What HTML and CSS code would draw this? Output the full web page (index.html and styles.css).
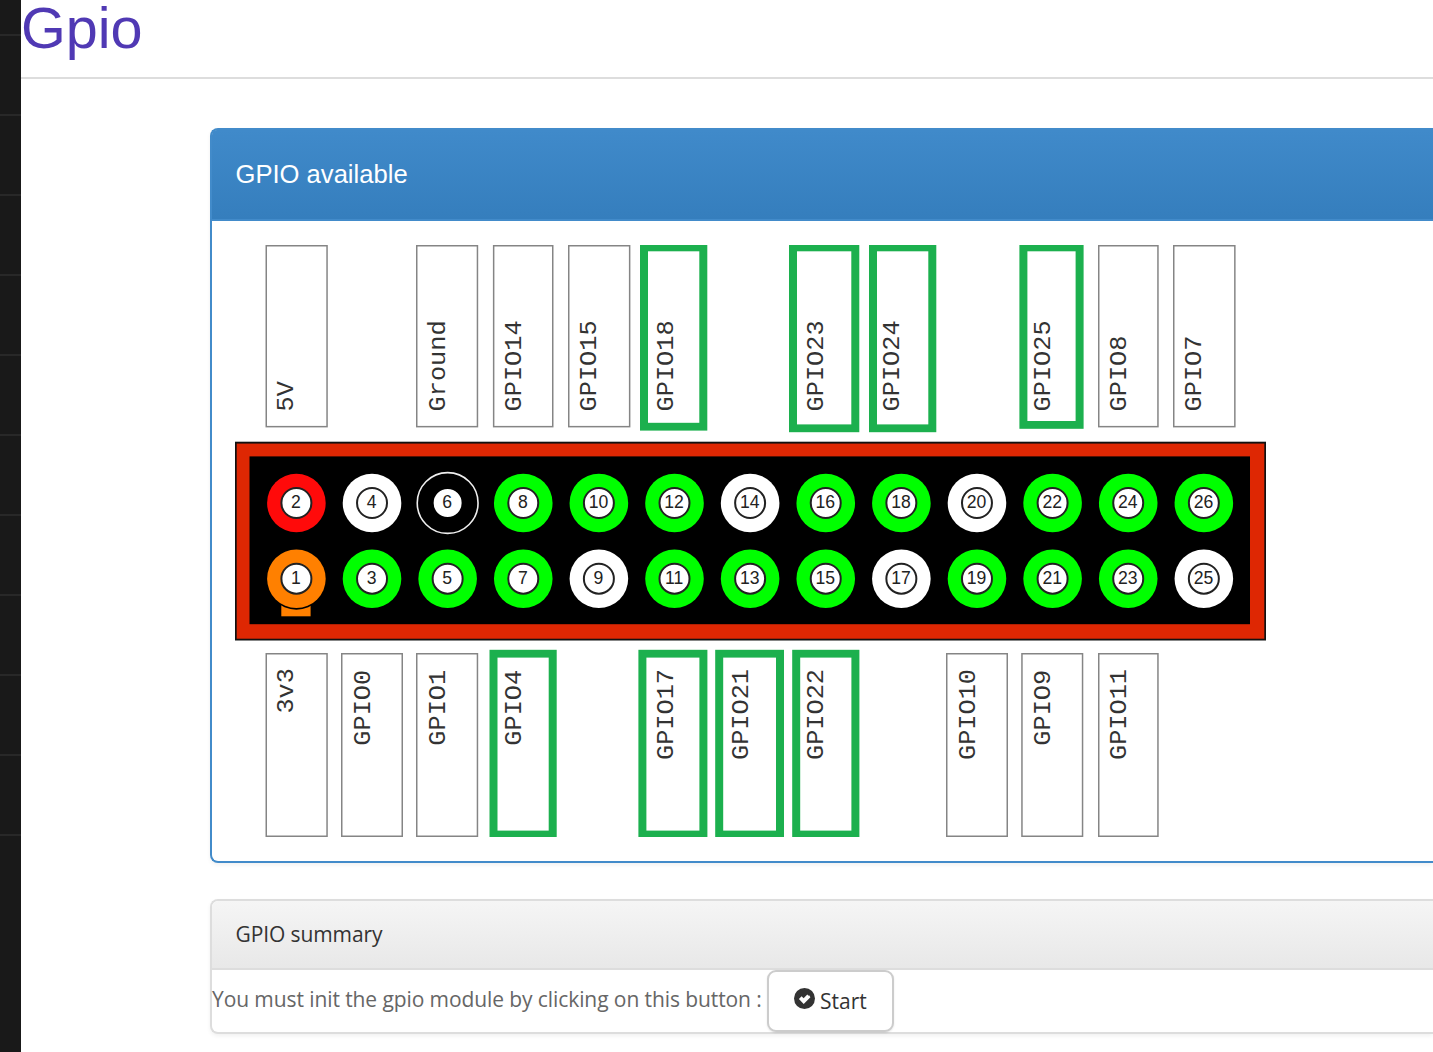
FILE: index.html
```html
<!DOCTYPE html>
<html lang="en">
<head>
<meta charset="utf-8">
<title>Gpio</title>
<link rel="stylesheet" href="styles.css">
</head>
<body>
<div class="layout">
  <nav class="sidebar">
    <div class="slot slot-first"></div><div class="slot"></div><div class="slot"></div><div class="slot"></div>
    <div class="slot"></div><div class="slot"></div><div class="slot"></div><div class="slot"></div>
    <div class="slot"></div><div class="slot"></div><div class="slot"></div>
  </nav>
  <main class="content">
    <h1 class="page-title">Gpio</h1>
    <section class="panel panel-primary">
      <h2 class="panel-heading">GPIO available</h2>
      <div class="panel-body">
        <svg class="board" id="board" viewBox="235 245 1031 592" width="1031" height="592"></svg>
      </div>
    </section>
    <section class="panel panel-default">
      <h2 class="panel-heading">GPIO summary</h2>
      <div class="start-row">
        <span class="hint">You must init the gpio module by clicking on this button :</span>
        <button class="btn" type="button">
          <svg class="check" viewBox="0 0 21 21" width="21" height="21"><circle cx="10.5" cy="10.5" r="10.5" fill="#333"/><path d="M4.9 11L7.6 8.3L9.6 10.3L13.3 6.6L14.5 7.8L15.1 7.2L16.4 9.2L9.7 15.9Z" fill="#fff"/></svg>
          <span class="btn-label">Start</span>
        </button>
      </div>
    </section>
  </main>
</div>
<script src="board.js"></script>
</body>
</html>
```
FILE: styles.css
```css
* { box-sizing: border-box; }
body { margin: 0; background: #fff; color: #666; font-family: "Open Sans", sans-serif; overflow: hidden; }
.layout { display: flex; height: 1052px; }
.sidebar { flex: 0 0 21px; background: #191919; overflow: hidden; }
.slot { height: 80px; border-bottom: 2px solid #282828; }
.slot-first { height: 36px; }
.content { flex: 1; min-width: 0; }
.page-title { margin: 0 0 49px; height: 79px; border-bottom: 2px solid #ddd; font: 400 57.6px/56px "Liberation Sans", sans-serif; color: #5039b4; }
.panel { margin-left: 189px; border: 2px solid #ddd; border-right: 0; border-radius: 8px 0 0 8px; background: #fff; box-shadow: 0 2px 4px rgba(0,0,0,.06); }
.panel-heading { margin: 0; font-weight: 400; padding-left: 23.5px; }
.panel-primary { height: 735px; border-color: #428bca; margin-bottom: 36px; }
.panel-primary .panel-heading { height: 91px; border-bottom: 2px solid #428bca; border-radius: 5px 0 0 0; background: linear-gradient(#408aca, #357ebd); color: #fff; font: 400 25.6px/89px "Liberation Sans", sans-serif; }
.panel-body { padding: 24px 23px; }
.board { display: block; }
.board-pin { font: 17.6px "Liberation Sans", sans-serif; fill: #222; text-anchor: middle; }
.board-label { font: 23px "Liberation Mono", monospace; fill: #333; }
.panel-default { height: 135px; }
.panel-default .panel-heading { height: 69px; border-bottom: 2px solid #ddd; border-radius: 6px 0 0 0; background: linear-gradient(#f5f5f5, #e8e8e8); color: #333; font-size: 21px; line-height: 67px; letter-spacing: -.1px; }
.start-row { display: flex; }
.hint { flex: 0 0 555px; font-size: 21px; line-height: 58px; letter-spacing: -.09px; white-space: nowrap; }
.btn { display: flex; align-items: center; gap: 5px; width: 127px; height: 62px; padding: 0 0 0 25px; border: 2px solid #ccc; border-radius: 9px; background: #fff; color: #333; font: 21px/58px "Open Sans", sans-serif; box-shadow: 0 1px 2px rgba(0,0,0,.1); }
.check { flex: none; margin-top: -5px; }
```
FILE: board.js
```js
const svg = document.getElementById('board');
const parts = [];
const rect = (l, t, r, b, fill) =>
  parts.push(`<rect x="${l}" y="${t}" width="${r - l}" height="${b - t}" fill="${fill}"/>`);
const frame = (l, t, r, b) =>
  parts.push(`<rect x="${l + 0.75}" y="${t + 0.75}" width="${r - l - 1.5}" height="${b - t - 1.5}" fill="#fff" stroke="#858585" stroke-width="1.5"/>`);
// Labels read upwards; the letters are drawn slightly extended
const label = (t, x, y) =>
  parts.push(`<text class="board-label" transform="translate(${x} ${y}) rotate(-90) scale(1.1 1)">${t}</text>`);

// Board outline
rect(235, 441.7, 1266, 640.5, '#111');
rect(236.7, 443.6, 1264.3, 638.7, '#de2703');
rect(249.5, 456.4, 1250, 624.2, '#000');

// Labels: text, left, right, bottom, text baseline, selected
[['5V', 265.5, 327.8, 427.4, 293], ['Ground', 416, 478.2, 427.4, 445], ['GPIO14', 492.9, 553.5, 427.4, 520.7],
 ['GPIO15', 568, 630.4, 427.4, 595.6], ['GPIO18', 640, 707.3, 430.6, 672.8, 1], ['GPIO23', 789, 859.3, 432.2, 823, 1],
 ['GPIO24', 869, 936.3, 432.2, 898.5, 1], ['GPIO25', 1019.4, 1083.6, 428.8, 1050.2, 1],
 ['GPIO8', 1098, 1158.7, 427.4, 1125.7], ['GPIO7', 1173, 1235.6, 427.4, 1201]
].forEach(([t, l, r, b, x, on]) => {
  if (on) { rect(l, 245, r, b, '#1cb04e'); rect(l + 8, 251.3, r - 8, b - 7.8, '#fff'); }
  else frame(l, 245, r, b);
  label(t, x, 411.4);
});
[['3v3', 265.5, 327.8, 713.6, 293], ['GPIO0', 341, 403, 745.7, 370.3], ['GPIO1', 416, 478.2, 745.7, 445],
 ['GPIO4', 489.5, 556.7, 745.7, 520.7, 1], ['GPIO17', 638.4, 707.4, 760, 672.8, 1],
 ['GPIO21', 715.2, 784, 760, 747.7, 1], ['GPIO22', 792.2, 859.4, 760, 823, 1],
 ['GPIO10', 946, 1008, 760, 975], ['GPIO9', 1021.2, 1083.3, 745.7, 1050.3], ['GPIO11', 1098, 1158.7, 760, 1125.7]
].forEach(([t, l, r, y, x, on]) => {
  if (on) { rect(l, 649.8, r, 837, '#1cb04e'); rect(l + 8, 657.6, r - 8, 830.6, '#fff'); }
  else frame(l, 653, r, 837);
  label(t, x, y);
});

// Pins, with the marker tab under pin 1
rect(281.3, 604, 310.6, 616.3, '#ff8000');
parts.push('<circle cx="296.4" cy="578.7" r="31" fill="#000"/>');
const special = { 1: '#ff8000', 2: '#ff0a0a', 4: '#fff', 6: '#000', 9: '#fff', 14: '#fff', 17: '#fff', 20: '#fff', 25: '#fff' };
for (let n = 1; n <= 26; n++) {
  const cx = 296.4 + Math.floor((n - 1) / 2) * 75.62, cy = n % 2 ? 578.7 : 503;
  parts.push(`<circle cx="${cx}" cy="${cy}" r="29.3" fill="${special[n] || '#0f0'}"/>`);
  if (n === 6) parts.push(`<circle cx="${cx}" cy="${cy}" r="30.4" fill="none" stroke="#eee" stroke-width="1.6"/>`);
  parts.push(`<circle cx="${cx}" cy="${cy}" r="15" fill="#fff" stroke="${n === 6 ? '#000' : '#222'}" stroke-width="2"/>`);
  parts.push(`<text class="board-pin" x="${cx - 0.4}" y="${n % 2 ? 584 : 507.8}">${n}</text>`);
}
svg.innerHTML = parts.join('');
```
